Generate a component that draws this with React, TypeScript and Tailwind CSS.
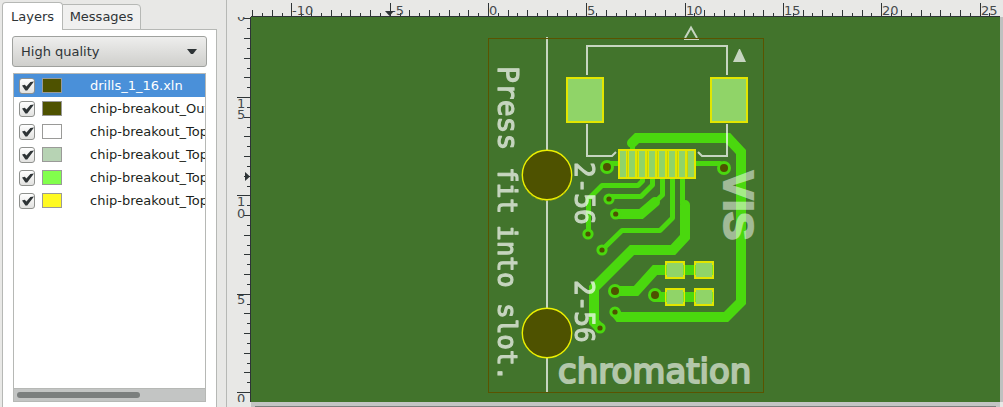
import { useState } from "react";

const layers = [
  { name: "drills_1_16.xln", swatch: "bg-[#4e5200]" },
  { name: "chip-breakout_Outline.gbr", swatch: "bg-[#4e5200]" },
  { name: "chip-breakout_TopSilk.gbr", swatch: "bg-white" },
  { name: "chip-breakout_TopMask.gbr", swatch: "bg-[#b7d3b4]" },
  { name: "chip-breakout_Top.gbr", swatch: "bg-[#82ff4c]" },
  { name: "chip-breakout_TopPaste.gbr", swatch: "bg-[#fffa22]" },
];

const UNIT = 19.66;

function LayerRow({ name, swatch, selected, onSelect }: { name: string; swatch: string; selected: boolean; onSelect: () => void }) {
  const [on, setOn] = useState(true);
  return (
    <li
      onClick={onSelect}
      className={
        selected
          ? "flex h-[23px] items-center bg-[#4a90d9] pl-[5px] text-white"
          : "flex h-[23px] items-center bg-white pl-[5px] text-[#1c1f20]"
      }
    >
      <label className="flex items-center whitespace-nowrap">
        <span className="grid size-4 shrink-0">
          <input
            type="checkbox"
            checked={on}
            onChange={() => setOn(!on)}
            className="col-start-1 row-start-1 size-4 appearance-none rounded-[3px] border border-[#8f918e] bg-linear-to-b from-white to-[#e2e2e0]"
          />
          {on && (
            <svg viewBox="0 0 16 16" className="pointer-events-none col-start-1 row-start-1 size-4">
              <path d="M3 7.4 L5.8 6.8 L7.4 8.6 L11.4 4 L15 3.6 L8.2 12.4 L6.4 12.4 Z" fill="#2e3436" />
            </svg>
          )}
        </span>
        <span className={`${swatch} ml-[7px] h-[15px] w-5 shrink-0 border border-[#9a9a98]`} />
        <span className="ml-7">{name}</span>
      </label>
    </li>
  );
}

function Sidebar() {
  const [selected, setSelected] = useState(0);
  return (
    <aside className="flex w-[227px] shrink-0 flex-col border-r border-[#b6b8b5] pt-[2px] pr-[9px] pl-[2px]">
      <div role="tablist" className="z-10 -mb-px flex items-end">
        <button role="tab" aria-selected="true" className="h-7 w-[61px] rounded-t-[4px] border border-b-0 border-[#b6b8b5] bg-white text-[13px] text-[#2e3436]">
          Layers
        </button>
        <button role="tab" aria-selected="false" className="-ml-px h-[26px] w-[79px] rounded-tr-[4px] border border-[#b6b8b5] bg-[#f0f0ef] text-[13px] text-[#2e3436]">
          Messages
        </button>
      </div>
      <div className="flex min-h-0 flex-1 flex-col border-x border-t border-[#b6b8b5] bg-white px-[9px] pt-[6px] pb-[5px]">
        <div className="grid items-center">
          <select
            aria-label="Rendering quality"
            className="col-start-1 row-start-1 h-[31px] w-full appearance-none rounded-[3px] border border-[#9fa19e] bg-linear-to-b from-[#eeeeed] to-[#cfcfcc] pl-2 text-[13px] text-[#2e3436]"
          >
            <option>High quality</option>
            <option>Normal</option>
            <option>Fast</option>
          </select>
          <svg viewBox="0 0 10 5" className="pointer-events-none col-start-1 row-start-1 mr-[10px] h-[5px] w-[10px] justify-self-end">
            <path d="M0 0H10L6 5H4Z" fill="#2e3436" />
          </svg>
        </div>
        <div className="mx-px mt-[6px] flex min-h-0 flex-1 flex-col border border-[#b6b8b5]">
          <ul className="min-h-0 flex-1 overflow-hidden text-[13px]">
            {layers.map((l, i) => (
              <LayerRow key={l.name} {...l} selected={i === selected} onSelect={() => setSelected(i)} />
            ))}
          </ul>
          <div className="flex h-[13px] items-center border-t border-[#b6b8b5] bg-[#c3c5c4] px-[3px]">
            <div className="h-[6px] w-2/3 rounded-full bg-[#7b7f7e]" />
          </div>
        </div>
      </div>
    </aside>
  );
}

const range = (from: number, to: number) => Array.from({ length: to - from + 1 }, (_, i) => from + i);

function TopRuler() {
  return (
    <svg className="block h-[17px] w-full" shapeRendering="crispEdges">
      <g transform="translate(-227 0)">
        <rect x="251" y="16" width="4000" height="1" fill="#2e3436" />
        {range(-24, 51).map((h) => {
          const x = Math.round(488 + (h * UNIT) / 2);
          const len = h % 10 === 0 ? 13 : h % 2 === 0 ? 6 : 3;
          return <rect key={h} x={x} y={16 - len} width="1" height={len} fill="#2e3436" />;
        })}
        {[-10, -5, 0, 5, 10, 15, 20, 25].map((n) => (
          <text key={n} x={Math.round(488 + n * UNIT) + 1} y="15" fontSize="13" fill="#454a4c">
            {n}
          </text>
        ))}
        <path d="M385 11H394L389.5 16Z" fill="#2e3436" shapeRendering="auto" />
      </g>
    </svg>
  );
}

function LeftRuler() {
  const labels: [string, number][] = [
    ["0", 21],
    ["1", 108],
    ["5", 119],
    ["1", 206],
    ["0", 218],
    ["5", 304],
    ["0", 403],
  ];
  return (
    <svg className="block h-full w-6 shrink-0 pb-[5px]" shapeRendering="crispEdges">
      <g transform="translate(-227 -17)">
        <rect x="250" y="17" width="1" height="385" fill="#2e3436" />
        {range(-1, 38).map((h) => {
          const y = Math.round(392 - (h * UNIT) / 2);
          const len = h % 10 === 0 ? 13 : h % 2 === 0 ? 6 : 3;
          return <rect key={h} x={250 - len} y={y} width={len} height="1" fill="#2e3436" />;
        })}
        {labels.map(([t, y]) => (
          <text key={y} x="237" y={y} fontSize="13" fill="#454a4c">
            {t}
          </text>
        ))}
        <path d="M245 172V181L250 176.5Z" fill="#2e3436" shapeRendering="auto" />
      </g>
    </svg>
  );
}

const vias = [
  [607, 167, 7, 4],
  [724, 168, 7, 4],
  [609, 199, 5.6, 2.6],
  [615.7, 214, 5.6, 2.6],
  [588, 234, 5.6, 2.6],
  [602, 250, 5.6, 2.6],
  [615, 291, 7, 4],
  [655, 295, 7, 4],
  [615, 312, 5.6, 2.6],
  [600, 328, 5.6, 2.6],
];

const thinTraces = [
  "M632.5 152V143",
  "M607 163.5H620",
  "M694 163.5H720L724 168",
  "M642.5 178V181L638 185.5H602L588.5 199V234",
  "M652.5 178V185L641 196.5H609",
  "M662.5 178V195L655 202",
  "M672.5 178V218L660 230.5H622L602 250",
  "M682.5 178V204",
];

const thickTraces = [
  "M632 143L637 138H728L741 152V302L726 317H619L615 312",
  "M655 202L641 214H616",
  "M685 205V237L673 250H632L594 288V322L600 328",
  "M615 291H636L655 270H704",
  "M655 297H704",
];

const silkWords: { text: string; x: number; y: number; size: number }[] = [
  { text: "Press", x: 498, y: 66, size: 28 },
  { text: "fit", x: 498, y: 167, size: 26 },
  { text: "into", x: 498, y: 225, size: 26 },
  { text: "slot.", x: 498, y: 303, size: 26 },
  { text: "2-56", x: 575, y: 162, size: 26 },
  { text: "2-56", x: 575, y: 280, size: 26 },
];

function Board() {
  return (
    <svg className="block size-full bg-[#42742c]" role="img" aria-label="Chip breakout board">
      <g transform="translate(-251 -17)">
        <g fill="none" stroke="#4ad80e" strokeLinejoin="round">
          {thinTraces.map((d) => (
            <path key={d} d={d} strokeWidth="5" />
          ))}
          {thickTraces.map((d) => (
            <path key={d} d={d} strokeWidth="10" strokeLinecap="round" strokeLinejoin="miter" />
          ))}
        </g>
        {vias.map(([x, y, r, hole]) => (
          <g key={`${x}-${y}`}>
            <circle cx={x} cy={y} r={r} fill="#4ad80e" />
            <circle cx={x} cy={y} r={hole} fill="#4e5200" />
          </g>
        ))}

        <g shapeRendering="crispEdges">
          <rect x="618" y="149" width="78" height="30" fill="#e2e600" />
          {[620, 629, 639, 649, 659, 669, 679, 688].map((x) => (
            <rect key={x} x={x} y="151" width="6" height="26" fill="#90d468" />
          ))}
          {[627, 637, 647, 657, 667, 677, 687].map((x) => (
            <rect key={x} x={x} y="151" width="1" height="26" fill="#c8d400" />
          ))}
          {[
            [566, 77, 38, 46],
            [710, 77, 38, 46],
            [665, 261, 20, 18],
            [694, 261, 20, 18],
            [665, 288, 20, 18],
            [694, 288, 20, 18],
          ].map(([x, y, w, h]) => (
            <g key={`${x}-${y}`}>
              <rect x={x} y={y} width={w} height={h} fill="#e2e600" />
              <rect x={x + 2} y={y + 2} width={w - 4} height={h - 4} fill="#90d468" />
            </g>
          ))}
          {[675, 704].map((x) => (
            <g key={x} fill="none" stroke="#7fe81c">
              <path d={`M${x - 8.5} 265V275M${x + 8.5} 265V275M${x - 8.5} 292V302M${x + 8.5} 292V302`} />
            </g>
          ))}
        </g>

        <g fill="none" stroke="#fff" strokeOpacity="0.7" strokeWidth="2">
          <path d="M547 37V150M547 200V308M547 358V392" />
          <path d="M587 75V46H727V75" />
          <path d="M587 124V156H612L616 152" />
          <path d="M727 124V156H702L698 152" />
          <path d="M685 38L691 27.5L697 38" />
          <path d="M684 39.5H699" strokeWidth="1" />
        </g>
        <path d="M733 62L739 49H740L746 62Z" fill="#fff" fillOpacity="0.7" />
        <rect x="488.5" y="38.5" width="275" height="354" fill="none" stroke="#5a5300" />

        {[175, 333].map((y) => (
          <circle key={y} cx="547" cy={y} r="24.7" fill="#4e5200" stroke="#ecf000" strokeWidth="1.4" />
        ))}
        <path d="M525 187A24 24 0 0 0 570 182" fill="none" stroke="#b8bb00" strokeDasharray="3 2" strokeWidth="0.7" />

        <g fill="#fff" stroke="#fff" strokeWidth="1.1" strokeLinejoin="round" opacity="0.7" fontFamily="'DejaVu Sans Mono', monospace">
          {silkWords.map(({ text, x, y, size }) => (
            <text key={`${text}${y}`} fontSize={size} transform={`translate(${x} ${y}) rotate(90)`}>
              {text}
            </text>
          ))}
        </g>
        <text
          transform="translate(724 171) rotate(90)"
          fontFamily="'Liberation Sans', Arial, sans-serif"
          fontWeight="bold"
          fontSize="43"
          fill="#fff"
          stroke="#fff"
          strokeWidth="2"
          opacity="0.5"
        >
          VIS
        </text>
        <text x="558" y="383" fontSize="34" fill="#fff" stroke="#fff" strokeWidth="2" strokeLinejoin="round" opacity="0.6">
          chromation
        </text>
      </g>
    </svg>
  );
}

export default function App() {
  return (
    <div className="flex h-screen overflow-hidden bg-[#e8e8e6] font-['DejaVu_Sans',sans-serif]">
      <Sidebar />
      <main className="flex min-w-0 flex-1 flex-col">
        <div className="shrink-0 pr-[3px]">
          <TopRuler />
        </div>
        <div className="flex min-h-0 flex-1">
          <LeftRuler />
          <div className="flex min-w-0 flex-1 flex-col">
            <div className="flex min-h-0 flex-1">
              <div className="min-w-0 flex-1">
                <Board />
              </div>
              <div className="w-[3px] bg-[#bfc1c0]" />
            </div>
            <div className="mr-[3px] flex h-[5px] items-end bg-[#c3c5c4] px-1">
              <div className="h-px flex-1 bg-[#7b7f7e]" />
            </div>
          </div>
        </div>
      </main>
    </div>
  );
}
